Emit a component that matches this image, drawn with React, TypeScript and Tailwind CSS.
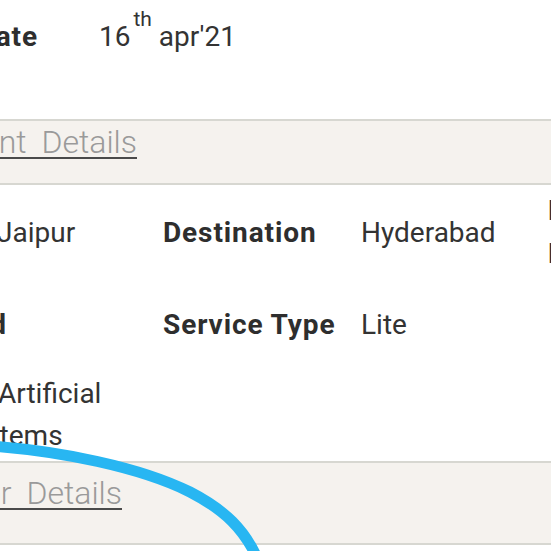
import type { ReactNode } from "react"

// text that runs off the left edge: the box's right edge is where the visible part ends
function Clip({ width, className, children }: { width: string; className?: string; children: ReactNode }) {
  return (
    <span className={`flex shrink-0 justify-end whitespace-nowrap ${width} ${className ?? ""}`}>
      {children}
    </span>
  )
}

function Band({ title, width, className }: { title: string; width: string; className: string }) {
  return (
    <div className={`flex border-y-2 border-[#d7d7d1] bg-[#f5f2ee] ${className}`}>
      <Clip
        width={width}
        className="text-[32px] font-light leading-[40px] text-[#9a9a9a] underline decoration-[#4a4a4a] decoration-2 underline-offset-[4px] [word-spacing:7px]"
      >
        {title}
      </Clip>
    </div>
  )
}

const label = "font-bold tracking-[0.9px] text-[#2e2e2e]"

export default function App() {
  return (
    <div className="relative h-[551px] w-[551px] overflow-hidden bg-white font-['Roboto','Liberation_Sans',sans-serif] text-[28px] leading-[43px] text-[#333]">
      <div className="flex h-[119px] pt-[15px]">
        <Clip width="w-[38px]" className={label}>
          Date
        </Clip>
        <span className="ml-[61px] whitespace-nowrap">
          16<sup className="-top-[20px] ml-[3px] text-[21px]">th</sup> apr'21
        </span>
      </div>

      <Band title="Shipment Details" width="w-[137px]" className="h-[66px] pt-[1px]" />

      <div className="grid grid-cols-[163px_198px_187px_120px]">
        <div className="flex h-[94px] items-center">
          <span className="-ml-[3px]">Jaipur</span>
        </div>
        <div className={`flex h-[94px] items-center ${label}`}>Destination</div>
        <div className="flex h-[94px] items-center">Hyderabad</div>
        <div className="flex h-[94px] items-center">
          <span className={`w-[90px] ${label}`}>Booking Date</span>
        </div>

        <div className="flex h-[90px] items-center">
          <Clip width="w-[7px]" className={label}>
            Paid
          </Clip>
        </div>
        <div className={`flex h-[90px] items-center ${label}`}>Service Type</div>
        <div className="flex h-[90px] items-center">Lite</div>
        <div className="h-[90px]" />

        <div className="flex h-[92px] items-center">
          <span className="-ml-[8px] w-[140px] indent-[6px] leading-[42px]">Artificial Items</span>
        </div>
        <div className="h-[92px]" />
        <div className="h-[92px]" />
        <div className="h-[92px]" />
      </div>

      <Band title="Consignor Details" width="w-[122px]" className="h-[84px] pt-[10px]" />

      <svg className="pointer-events-none absolute inset-0" width="551" height="551" viewBox="0 0 551 551">
        <path
          d="M -10 446 C 60 451, 140 467, 190 492 C 225 510, 245 530, 258 560"
          fill="none"
          stroke="#28b6f2"
          strokeWidth="11"
          strokeLinecap="round"
        />
      </svg>
    </div>
  )
}
